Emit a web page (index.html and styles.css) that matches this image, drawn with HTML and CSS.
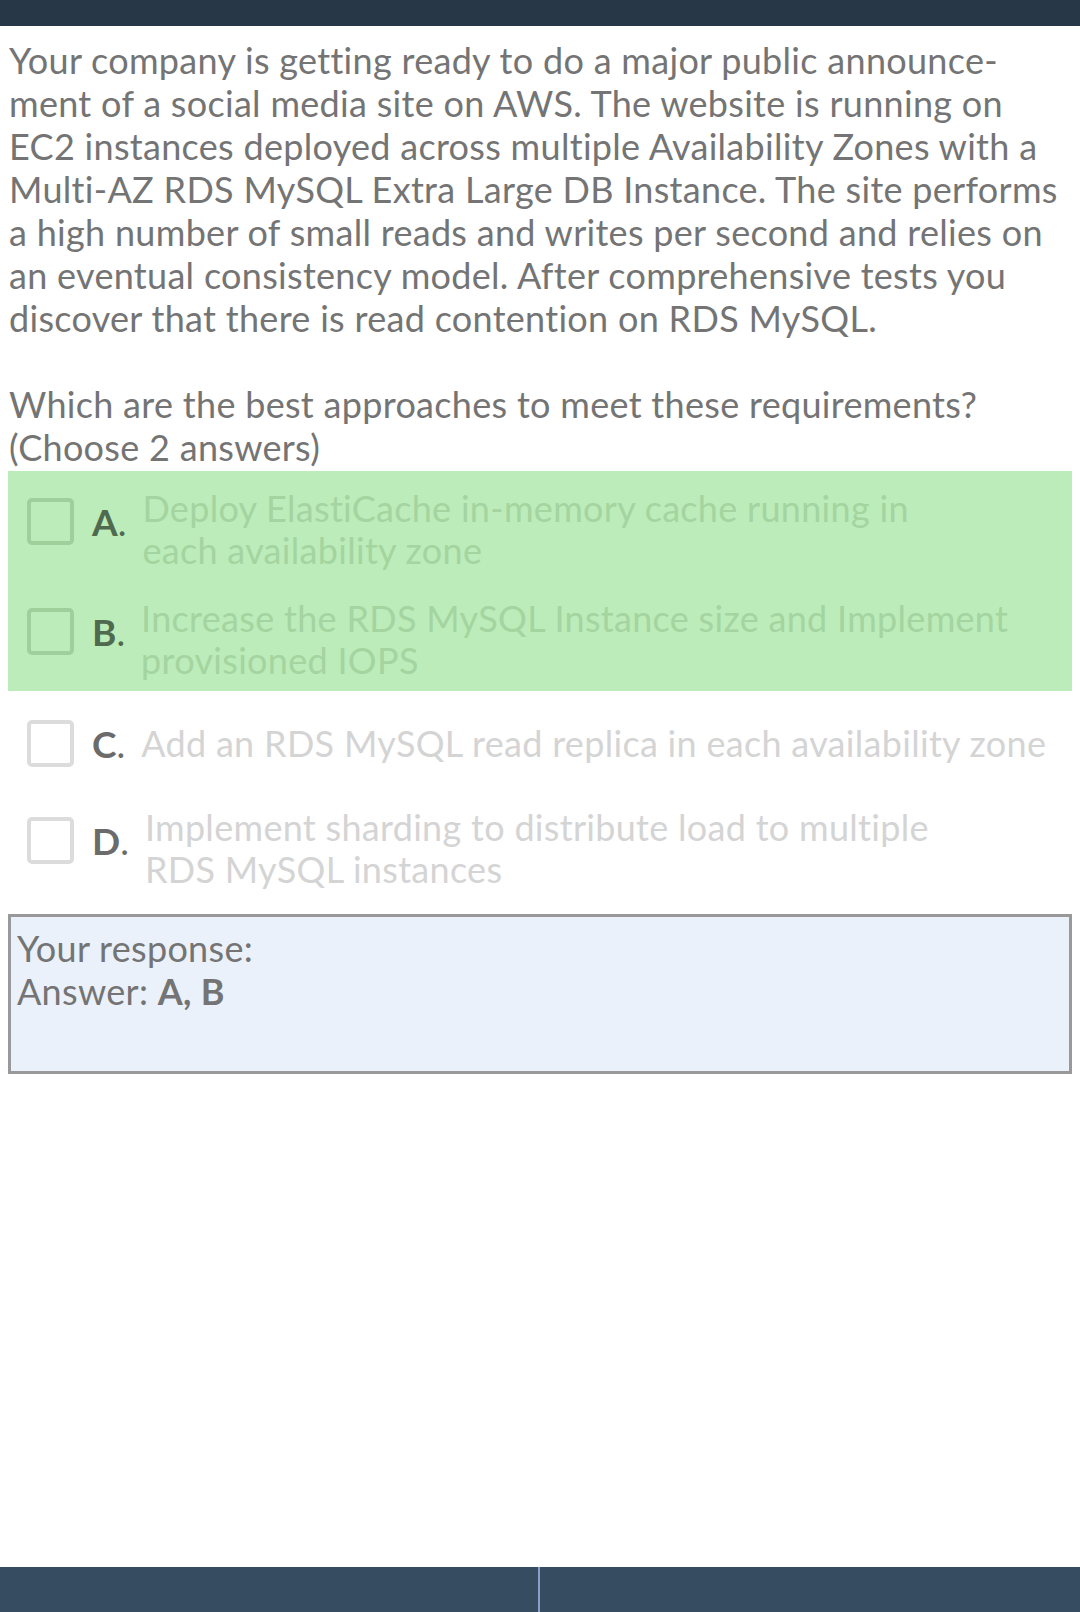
FILE: index.html
```html
<!DOCTYPE html>
<html lang="en">
<head>
<meta charset="utf-8">
<title>Question</title>
<link rel="stylesheet" href="styles.css">
</head>
<body>
<div class="page">
  <header class="topbar"></header>
  <main class="content">
    <p class="stem">Your company is getting ready to do a major public announce-<br>ment of a social media site on AWS. The website is running on<br>EC2 instances deployed across multiple Availability Zones with a<br>Multi-AZ RDS MySQL Extra Large DB Instance. The site performs<br>a high number of small reads and writes per second and relies on<br>an eventual consistency model. After comprehensive tests you<br>discover that there is read contention on RDS MySQL.</p>
    <p class="stem ask">Which are the best approaches to meet these requirements?<br>(Choose 2 answers)</p>
    <div class="options">
      <div class="correct">
        <div class="option two">
          <span class="box"></span><span class="label"><b>A</b>.</span>
          <span class="text">Deploy ElastiCache in-memory cache running in<br>each availability zone</span>
        </div>
        <div class="option two">
          <span class="box"></span><span class="label"><b>B</b>.</span>
          <span class="text">Increase the RDS MySQL Instance size and Implement<br>provisioned IOPS</span>
        </div>
      </div>
      <div class="option">
        <span class="box"></span><span class="label"><b>C</b>.</span>
        <span class="text">Add an RDS MySQL read replica in each availability zone</span>
      </div>
      <div class="option two">
        <span class="box"></span><span class="label"><b>D</b>.</span>
        <span class="text">Implement sharding to distribute load to multiple<br>RDS MySQL instances</span>
      </div>
    </div>
    <div class="response">
      <div>Your response:</div>
      <div>Answer: <b>A, B</b></div>
    </div>
  </main>
  <footer class="bottombar">
    <div class="half"></div>
    <div class="half right"></div>
  </footer>
</div>
</body>
</html>
```

FILE: styles.css
```css
html, body {
  margin: 0;
  padding: 0;
  background: #ffffff;
}
body {
  font-family: Lato, "Open Sans", sans-serif;
  color: #747474;
}
.page {
  min-height: 100vh;
  display: flex;
  flex-direction: column;
}
.topbar {
  height: 26px;
  background: #283748;
  flex: none;
}
.content {
  flex: 1;
  padding: 13px 8px 0 8px;
}
.stem {
  margin: 0 0 43px 1px;
  font-size: 36px;
  line-height: 43px;
  letter-spacing: 0.3px;
  white-space: nowrap;
}
.stem.ask {
  margin-bottom: 2px;
}
.options {
  display: flex;
  flex-direction: column;
}
.correct {
  background: #bcecb9;
  display: flex;
  flex-direction: column;
}
.option {
  display: flex;
  align-items: center;
  min-height: 99px;
  padding: 15px 0 10px 0;
  box-sizing: border-box;
}
.option.two {
  min-height: 110px;
}
.box {
  flex: none;
  width: 47px;
  height: 47px;
  box-sizing: border-box;
  border: 4px solid #dcdcdc;
  border-radius: 5px;
  margin-left: 19px;
  margin-right: 18px;
}
.label {
  flex: none;
  font-size: 37px;
  color: #6b6b6b;
  margin-right: 16px;
}
.label b {
  font-weight: 700;
}
.two .box {
  margin-top: -14px;
}
.two .label {
  margin-top: -14px;
}
.text {
  font-size: 36px;
  line-height: 42px;
  letter-spacing: 0.3px;
  color: #d4d4d4;
  white-space: nowrap;
}
.correct .box { border-color: #9fcf9b; }
.correct .label { color: #4f6a4f; }
.correct .text { color: #a4d4a0; }

.response {
  margin-top: 14px;
  height: 160px;
  box-sizing: border-box;
  border: 3px solid #999999;
  background: #eaf1fa;
  padding: 10px 6px;
  font-size: 36px;
  line-height: 43px;
  letter-spacing: 0.3px;
  color: #747474;
}
.response b {
  font-weight: 700;
}
.bottombar {
  flex: none;
  height: 45px;
  display: grid;
  grid-template-columns: 538px 1fr;
  background: #354c61;
}
.half.right {
  border-left: 2px solid #8a9fd0;
}
```
